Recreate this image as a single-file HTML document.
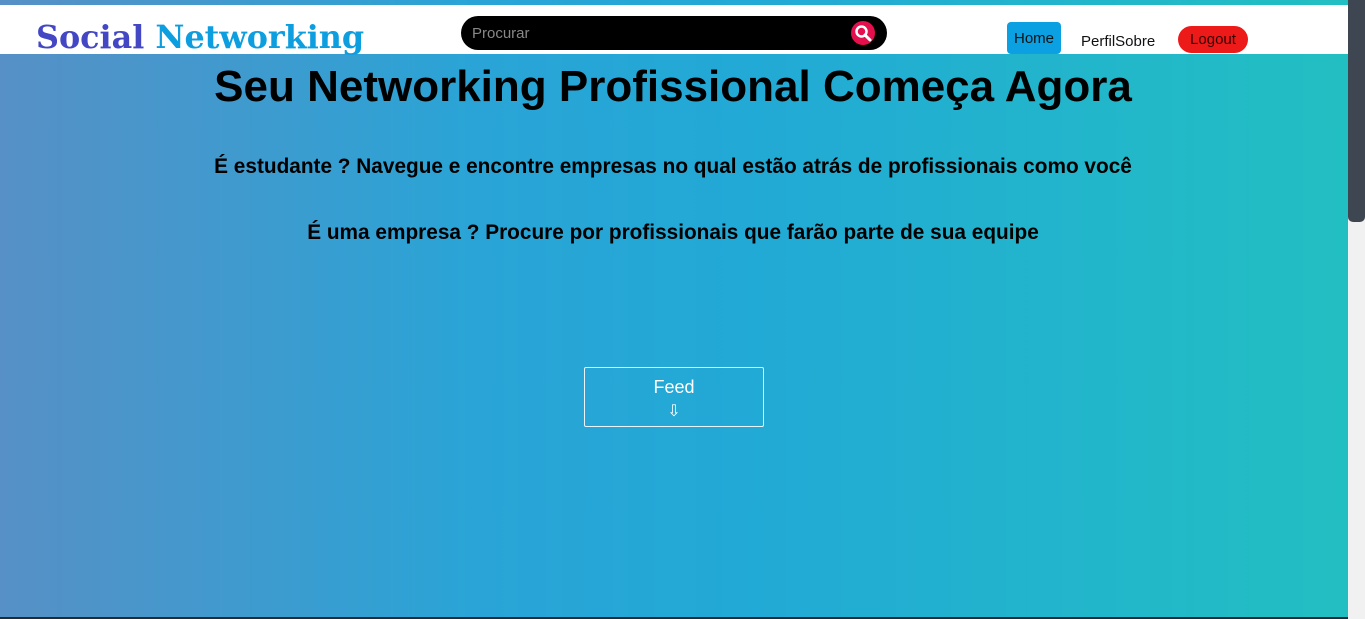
<!DOCTYPE html>
<html><head><meta charset="utf-8"><style>
*{margin:0;padding:0;box-sizing:border-box}
body{width:1365px;height:619px;overflow:hidden;position:relative;font-family:"Liberation Sans",sans-serif;background:#fff}
.bg{position:absolute;left:0;top:0;width:1348px;height:617px;background:linear-gradient(90deg,#5690c6 0%,#2aa4d6 35%,#22a9d6 55%,#22bfc2 100%)}
.bot{position:absolute;left:0;top:617px;width:1348px;height:2px;background:#1f2b36}
.hdr{position:absolute;left:0;top:5px;width:1348px;height:49px;background:#fff}
.logo{position:absolute;left:36px;top:18px;font-family:"DejaVu Serif",serif;font-weight:bold;font-size:31.8px;line-height:40px;white-space:nowrap}
.search{position:absolute;left:461px;top:16px;width:426px;height:34px;background:#000;border-radius:17px}
.search span{position:absolute;left:11px;top:9px;color:#888;font-size:15px}
.sic{position:absolute;left:390px;top:5px;width:24px;height:24px;border-radius:50%;background:#e4104e}
.home{position:absolute;left:1007px;top:22px;width:54px;height:32px;background:#0aa0e2;border-radius:4px;font-size:15px;line-height:34px;text-align:center;color:#111}
.nav{position:absolute;left:1081px;top:33px;font-size:15px;color:#111}
.logout{position:absolute;left:1178px;top:26px;width:70px;height:27px;background:#ed1a1a;border-radius:14px;font-size:15px;line-height:28px;text-align:center;color:#300}
h1{position:absolute;left:0;width:1346px;top:62px;text-align:center;font-size:44px;color:#000}
.p{position:absolute;width:1346px;text-align:center;font-weight:bold;font-size:20.8px;color:#000}
.feed{position:absolute;left:584px;top:367px;width:180px;height:60px;border:1px solid #e8f4ff;color:#fff;text-align:center;font-size:18px;padding-top:9px;border-radius:2px}
.sb{position:absolute;left:1348px;top:0;width:17px;height:619px;background:#f1f1f1}
.th{position:absolute;left:1348px;top:0;width:17px;height:222px;background:#3e4751;border-radius:0 0 5px 5px}
</style></head><body>
<div class="bg"></div><div class="bot"></div>
<div class="hdr"></div>
<div class="logo"><span style="color:#4347c4">Social</span> <span style="color:#0d9ee0">Networking</span></div>
<div class="search"><span>Procurar</span><div class="sic"><svg width="24" height="24" viewBox="0 0 24 24"><circle cx="10.5" cy="10.5" r="5" fill="none" stroke="#fff" stroke-width="2.5"/><path d="M14 14l5 5" stroke="#fff" stroke-width="3" stroke-linecap="round"/></svg></div></div>
<div class="home">Home</div>
<div class="nav">PerfilSobre</div>
<div class="logout">Logout</div>
<h1>Seu Networking Profissional Começa Agora</h1>
<div class="p" style="top:155px">É estudante ? Navegue e encontre empresas no qual estão atrás de profissionais como você</div>
<div class="p" style="top:221px">É uma empresa ? Procure por profissionais que farão parte de sua equipe</div>
<div class="feed">Feed<div style="font-size:16px;margin-top:3px">⇩</div></div>
<div class="sb"></div><div class="th"></div>
</body></html>
